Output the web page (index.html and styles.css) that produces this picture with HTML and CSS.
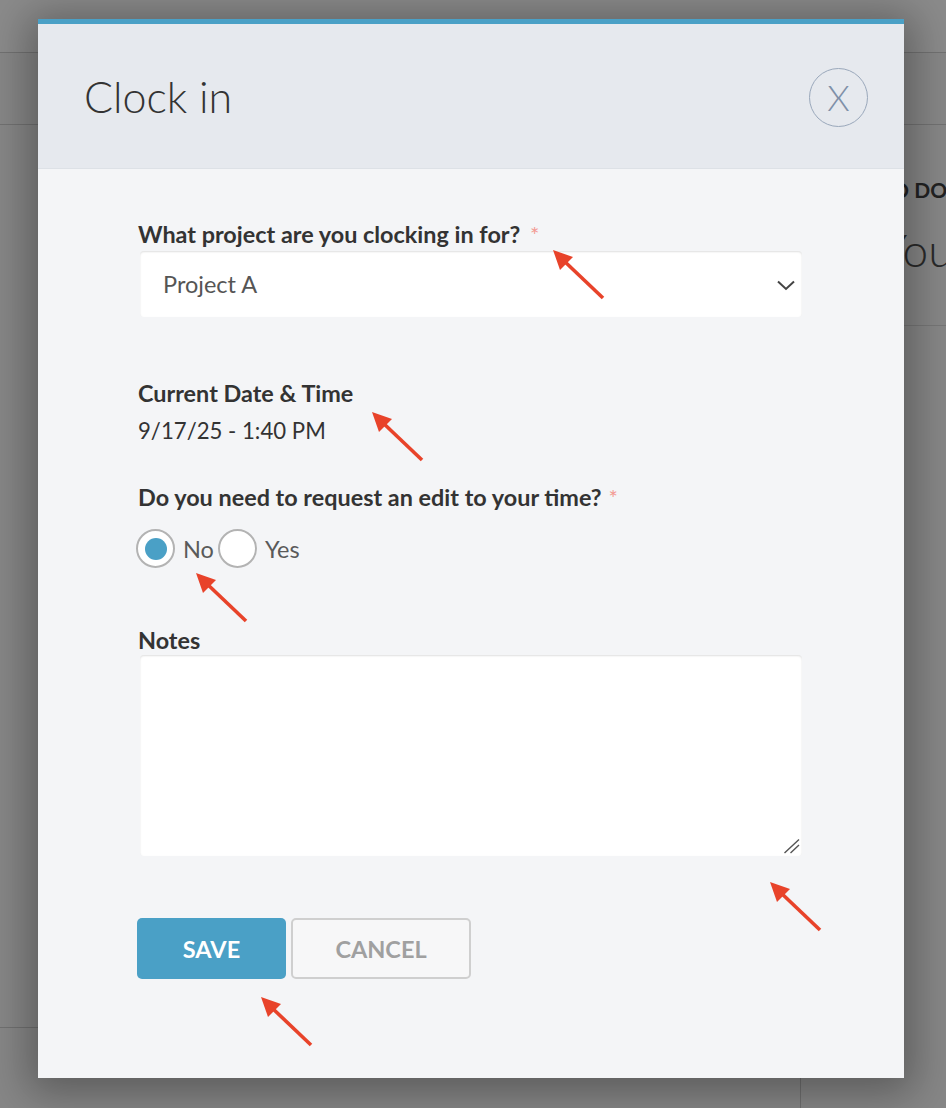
FILE: index.html
```html
<!DOCTYPE html>
<html lang="en">
<head>
<meta charset="utf-8">
<title>Clock in</title>
<link rel="stylesheet" href="styles.css">
</head>
<body>
<div class="page">
  <div class="bg-top"></div>
  <div class="bg-sub"></div>
  <div class="bg-main">
    <div class="bg-left"><div class="bg-card"></div></div>
    <div class="bg-right">
      <div class="bg-panel">
        <div class="bg-heading">TO DO</div>
        <div class="bg-big">You</div>
      </div>
    </div>
  </div>
</div>

<div class="modal" role="dialog" aria-labelledby="modal-title">
  <header class="modal-header">
    <h1 class="modal-title" id="modal-title">Clock in</h1>
    <button class="close-btn" type="button" aria-label="Close">X</button>
  </header>
  <div class="modal-body">
    <form class="form">
      <div class="field">
        <div class="field-label">What project are you clocking in for? <span class="req req-wide">*</span></div>
        <div class="select">
          <span class="select-value">Project A</span>
          <svg class="chevron" width="18" height="11" viewBox="0 0 18 11"><path d="M1 1.5 L9 9 L17 1.5" fill="none" stroke="#444" stroke-width="2"/></svg>
        </div>
      </div>

      <div class="field field-date">
        <div class="field-label">Current Date &amp; Time</div>
        <div class="field-value">9/17/25 - 1:40 PM</div>
      </div>

      <div class="field field-edit">
        <div class="field-label">Do you need to request an edit to your time?<span class="req">*</span></div>
        <div class="radio-row">
          <span class="radio checked"><span class="radio-dot"></span></span>
          <span class="radio-text">No</span>
          <span class="radio"></span>
          <span class="radio-text">Yes</span>
        </div>
      </div>

      <div class="field field-notes">
        <div class="field-label">Notes</div>
        <div class="notes-wrap">
          <textarea class="notes"></textarea>
          <svg class="resize-handle" width="16" height="15" viewBox="0 0 16 15"><path d="M0.5 14 L15 0.5 M6.5 14 L15 6" fill="none" stroke="#555" stroke-width="1.4"/></svg>
        </div>
      </div>

      <div class="actions">
        <button class="btn btn-save" type="button">SAVE</button>
        <button class="btn btn-cancel" type="button">CANCEL</button>
      </div>
    </form>
  </div>
</div>

<svg class="annotations" width="946" height="1108" viewBox="0 0 946 1108">
  <defs>
    <g id="arrow">
      <line x1="9" y1="9" x2="50" y2="48" stroke="#e8432a" stroke-width="3.6"/>
      <polygon points="0,0 20,7 7,20" fill="#e8432a"/>
    </g>
  </defs>
  <use href="#arrow" transform="translate(553,250)"/>
  <use href="#arrow" transform="translate(372,412)"/>
  <use href="#arrow" transform="translate(196,573)"/>
  <use href="#arrow" transform="translate(770,882)"/>
  <use href="#arrow" transform="translate(261,997)"/>
</svg>
</body>
</html>
```

FILE: styles.css
```css
html, body {
  margin: 0;
  padding: 0;
}
body {
  width: 946px;
  height: 1108px;
  overflow: hidden;
  position: relative;
  font-family: Lato, "Open Sans", "Liberation Sans", sans-serif;
  background: #858585;
}

/* background page under the overlay */
.page {
  height: 1108px;
  background: #878787;
}
.bg-top {
  height: 52px;
  border-bottom: 1px solid #727272;
  background: #8b8b8b;
}
.bg-sub {
  height: 71px;
  border-bottom: 1px solid #727272;
}
.bg-main {
  display: grid;
  grid-template-columns: 800px 1fr;
}
.bg-card {
  height: 902px;
  border-bottom: 1px solid #717171;
}
.bg-right {
  border-left: 1px solid #6f6f6f;
  min-height: 983px;
}
.bg-panel {
  box-sizing: border-box;
  height: 201px;
  padding: 53px 0 0 79px;
  border-bottom: 1px solid #777;
}
.bg-heading {
  font-size: 21px;
  line-height: 24px;
  font-weight: 700;
  color: #222;
  white-space: nowrap;
}
.bg-big {
  margin-top: 20px;
  font-size: 46px;
  line-height: 55px;
  font-weight: 300;
  color: #2a2a2a;
  white-space: nowrap;
}

/* modal */
.modal {
  position: absolute;
  left: 38px;
  top: 19px;
  width: 866px;
  height: 1059px;
  box-sizing: border-box;
  border-top: 5px solid #4aa0c6;
  background: #f4f5f7;
  box-shadow: 0 6px 40px 10px rgba(0, 0, 0, 0.32);
  display: flex;
  flex-direction: column;
}
.modal-header {
  height: 145px;
  box-sizing: border-box;
  background: #e6e9ee;
  border-bottom: 1px solid #dde1e6;
  display: flex;
  align-items: center;
  justify-content: space-between;
  padding: 0 36px 0 46px;
}
.modal-title {
  margin: 0;
  font-size: 43px;
  line-height: 52px;
  font-weight: 300;
  color: #333;
  padding-top: 1px;
}
.close-btn {
  width: 59px;
  height: 59px;
  border-radius: 50%;
  border: 1px solid #9aa8bb;
  background: transparent;
  color: #7f90a8;
  font-family: Lato, "Open Sans", sans-serif;
  font-weight: 300;
  font-size: 36px;
  line-height: 1;
  padding: 0 0 2px;
  margin-top: 3px;
  display: flex;
  align-items: center;
  justify-content: center;
}

.modal-body {
  padding: 53px 100px 0 100px;
}
.form {
  display: flex;
  flex-direction: column;
}
.field-label {
  font-size: 23.4px;
  line-height: 24px;
  font-weight: 700;
  color: #333;
  white-space: nowrap;
}
.req {
  color: #f39a93;
  font-size: 22px;
  font-weight: 400;
  margin-left: 7px;
}
.req-wide {
  margin-left: 4px;
}

.select {
  margin: 4px 2px 0 2px;
  height: 66px;
  box-sizing: border-box;
  background: #fff;
  border-radius: 4px;
  box-shadow: inset 0 1px 2px rgba(0, 0, 0, 0.13);
  display: flex;
  align-items: center;
  justify-content: space-between;
  padding: 0 7px 0 23px;
}
.select-value {
  font-size: 23.5px;
  color: #555;
}
.chevron {
  display: block;
  margin-top: 2px;
}

.field-date {
  margin-top: 64px;
}
.field-value {
  margin-top: 14px;
  font-size: 22.2px;
  line-height: 24px;
  color: #333;
}

.field-edit {
  margin-top: 42px;
}
.radio-row {
  margin-top: 19px;
  margin-left: -2px;
  display: flex;
  align-items: center;
  height: 39px;
}
.radio {
  width: 39px;
  height: 39px;
  box-sizing: border-box;
  border-radius: 50%;
  border: 2px solid #b3b3b3;
  background: #fff;
  display: flex;
  align-items: center;
  justify-content: center;
}
.radio-dot {
  width: 22px;
  height: 22px;
  border-radius: 50%;
  background: #4aa0c6;
}
.radio-text {
  font-size: 23.5px;
  color: #5a5a5a;
  margin: 0 4px 0 8px;
}

.field-notes {
  margin-top: 60px;
}
.notes-wrap {
  position: relative;
  margin: 3px 2px 0 2px;
}
.notes {
  display: block;
  width: 662px;
  height: 201px;
  box-sizing: border-box;
  border: none;
  border-radius: 4px;
  background: #fff;
  box-shadow: inset 0 1px 2px rgba(0, 0, 0, 0.13);
  resize: none;
  outline: none;
}
.resize-handle {
  position: absolute;
  right: 2px;
  bottom: 2px;
}

.actions {
  margin-top: 62px;
  margin-left: -1px;
  display: flex;
  gap: 5px;
}
.btn {
  height: 61px;
  box-sizing: border-box;
  border-radius: 5px;
  font-family: Lato, "Open Sans", sans-serif;
  font-weight: 700;
  font-size: 23.5px;
  display: flex;
  align-items: center;
  justify-content: center;
  padding: 0;
}
.btn-save {
  width: 149px;
  border: none;
  background: #4aa0c6;
  color: #fff;
}
.btn-cancel {
  width: 180px;
  border: 2px solid #cfcfcf;
  background: #f7f7f8;
  color: #a0a0a0;
}

.annotations {
  position: absolute;
  left: 0;
  top: 0;
  pointer-events: none;
}
```
